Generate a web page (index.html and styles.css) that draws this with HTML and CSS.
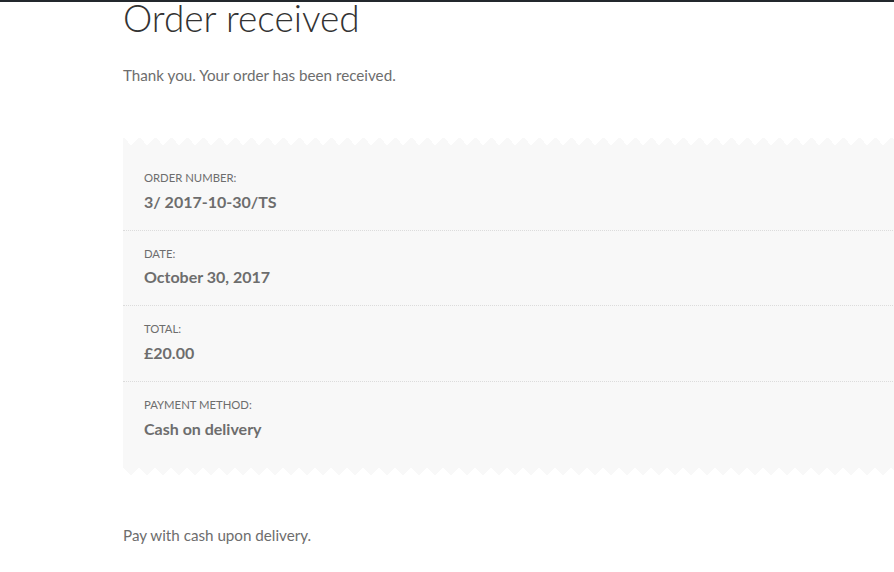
FILE: index.html
```html
<!DOCTYPE html>
<html lang="en">
<head>
    <meta charset="UTF-8">
    <meta name="viewport" content="width=device-width, initial-scale=1.0">
    <title>Order received</title>
    <link rel="stylesheet" href="styles.css">
</head>
<body>
    <div class="admin-bar"></div>

    <main class="site-main">
        <h1 class="entry-title">Order received</h1>

        <p class="thankyou">Thank you. Your order has been received.</p>

        <ul class="order-overview">
            <li class="order-item">
                <span class="order-label">Order number:</span>
                <strong class="order-value">3/ 2017-10-30/TS</strong>
            </li>
            <li class="order-item">
                <span class="order-label">Date:</span>
                <strong class="order-value">October 30, 2017</strong>
            </li>
            <li class="order-item">
                <span class="order-label">Total:</span>
                <strong class="order-value">&pound;20.00</strong>
            </li>
            <li class="order-item">
                <span class="order-label">Payment method:</span>
                <strong class="order-value">Cash on delivery</strong>
            </li>
        </ul>

        <p class="payment-note">Pay with cash upon delivery.</p>
    </main>
</body>
</html>
```

FILE: styles.css
```css
html, body {
    overflow: hidden;
}

body {
    margin: 0;
    font-family: Lato, "Open Sans", sans-serif;
    font-size: 15.2px;
    color: #6d6d6d;
    background-color: #ffffff;
}

.admin-bar {
    height: 2px;
    background-color: #23282d;
}

.site-main {
    padding-left: 123px;
    width: 1000px;
}

.entry-title {
    margin: 0;
    font-size: 37px;
    font-weight: 300;
    line-height: 31px;
    color: #333333;
}

.thankyou {
    margin: 29px 0 0;
    line-height: 26px;
}

.order-overview {
    position: relative;
    list-style: none;
    margin: 57px 0 55px;
    padding: 10px 0;
    background-color: #f8f8f8;
}

/* zigzag edges */
.order-overview::before,
.order-overview::after {
    content: "";
    position: absolute;
    left: 0;
    width: 100%;
    height: 8px;
    background-repeat: repeat-x;
    background-size: 16px 8px;
}

.order-overview::before {
    top: -8px;
    background-image: conic-gradient(from 135deg at 50% 0, #f8f8f8 90deg, transparent 0);
    background-position: -8px 0;
}

.order-overview::after {
    bottom: -8px;
    background-image: conic-gradient(from -45deg at 50% 100%, #f8f8f8 90deg, transparent 0);
}

.order-item {
    display: flex;
    flex-direction: column;
    padding: 13px 0 16px 21px;
    border-bottom: 1px dotted #dcdcdc;
}

.order-item:last-child {
    border-bottom: none;
}

.order-label {
    font-size: 11.3px;
    line-height: 20px;
    text-transform: uppercase;
}

.order-value {
    margin-top: 1.7px;
    font-size: 16px;
    line-height: 24px;
    font-weight: 700;
}

.payment-note {
    margin: 0;
    line-height: 26px;
}
```
